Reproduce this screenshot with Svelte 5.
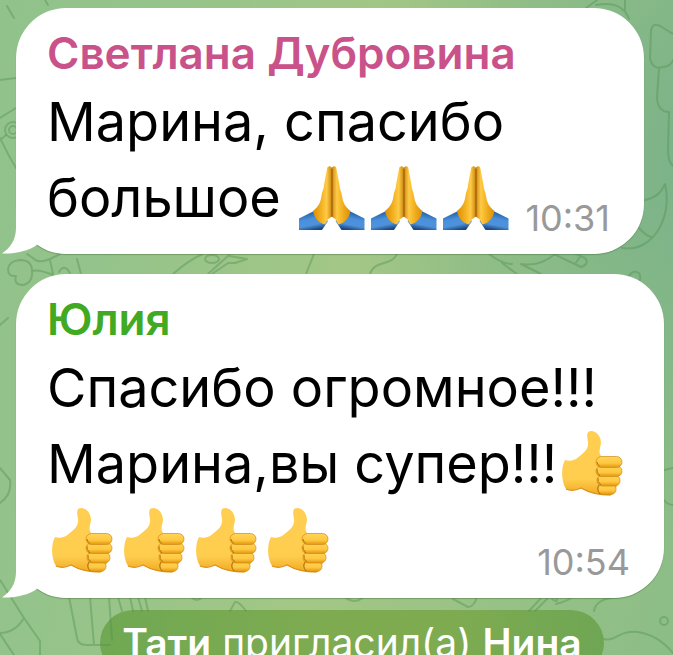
<script lang="ts">
  type Emoji = 'pray' | 'thumb'

  interface Line {
    text: string
    emoji?: Emoji
    count?: number
  }

  interface Message {
    author: string
    tone: string
    time: string
    lines: Line[]
  }

  const messages: Message[] = [
    {
      author: 'Светлана Дубровина',
      tone: 'pink',
      time: '10:31',
      lines: [{ text: 'Марина, спасибо' }, { text: 'большое ', emoji: 'pray', count: 3 }],
    },
    {
      author: 'Юлия',
      tone: 'green',
      time: '10:54',
      lines: [
        { text: 'Спасибо огромное!!!' },
        { text: 'Марина,вы супер!!!', emoji: 'thumb', count: 1 },
        { text: '', emoji: 'thumb', count: 4 },
      ],
    },
  ]
</script>

<svg class="defs" width="0" height="0" aria-hidden="true">
  <defs>
    <linearGradient id="skin" x1="0" y1="0" x2="0" y2="1">
      <stop offset="0" stop-color="#ffcf52" />
      <stop offset="0.75" stop-color="#ffcd4e" />
      <stop offset="1" stop-color="#f0a920" />
    </linearGradient>
    <linearGradient id="finger" x1="0" y1="0" x2="0" y2="1">
      <stop offset="0" stop-color="#ffd45a" />
      <stop offset="0.6" stop-color="#ffc840" />
      <stop offset="1" stop-color="#e2960f" />
    </linearGradient>
    <linearGradient id="palm" x1="0" y1="0" x2="1" y2="0">
      <stop offset="0" stop-color="#d98e08" />
      <stop offset="0.4" stop-color="#f2ae1e" />
      <stop offset="0.72" stop-color="#ffcb45" />
      <stop offset="1" stop-color="#c8820e" />
    </linearGradient>
    <linearGradient id="sleeve" x1="0.2" y1="0" x2="0.5" y2="1">
      <stop offset="0" stop-color="#145499" />
      <stop offset="0.45" stop-color="#4a90da" />
      <stop offset="0.75" stop-color="#4e92da" />
      <stop offset="1" stop-color="#1c4783" />
    </linearGradient>
    <g id="arm">
      <path d="M18 49 L3 56.500 V68 H26 L32 59 Z" fill="url(#sleeve)" />
      <path d="M36 6 C34 3 31 4 31 7 L28 23 C28 27 26 29 25.500 34 C24.500 41 22 45 17 49 C18 56 23 61 29 62.500 C31 60 31 57 34 56 L36 54 Z" fill="url(#palm)" />
    </g>
  </defs>
</svg>

<main class="chat">
  <svg class="doodles" viewBox="0 0 673 655" preserveAspectRatio="xMidYMid slice" aria-hidden="true">
    <path d="M7 6 L14 18 M45 0 L48 5 M0 80 L16 78 M0 118 L16 108 M0 138 Q8 155 16 168 M0 140 L6 135" />
    <circle cx="13" cy="130" r="8" />
    <circle cx="13" cy="130" r="4" />
    <path d="M586 8 L597 0 M596 5 Q622 0 629 19 M625 0 V12" />
    <path d="M673 34 L660 26 Q652 22 651 31 L650 58 Q652 70 663 67 Q671 66 673 60 M659 68 L657 98 Q658 112 669 112 M669 112 L668 150 Q668 162 673 166" />
    <path d="M644 200 Q659 198 665 184 C673 217 653 253 622 248 M639 228 Q645 235 651 237" />
    <path d="M554 254 L581 267 Q590 264 585 258 L572 252 M575 264 L580 257" />
    <path d="M489 254 Q502 264 512 264 M502 263 L517 274 M521 264 Q540 267 555 254 M521 264 L541 274" />
    <path d="M628 278 Q632 269 639 273 Q643 280 636 284" />
    <path d="M370 274 C374 260 392 266 397 254 M173 274 Q190 259 203 254 M208 274 L229 255 M212 274 L228 263 H235 L247 259 L229 256 M306 274 L314 254" />
    <ellipse cx="212" cy="259" rx="7" ry="4" />
    <path d="M32 271 Q32 260 20 260 Q9 261 8 269 Q8 277 16 276 Q13 285 24 285 Q33 282 32 271 Q39 269 53 275 M27 254 L33 258 Q38 264 50 259 L60 254 M50 260 L53 274 M77 259 L81 274 M59 272 Q64 263 70 273" />
    <path d="M0 580 L24 618 L40 641 V655 M0 633 Q15 633 24 618 M0 634 L14 655" />
    <path d="M69 597 L77 638 Q78 645 86 645 H110 M90 597 L94 645 M109 597 L112 640 M118 597 L122 611 M130 597 L133 611 M138 597 L142 611 M145 597 L148 611 M191 597 Q197 603 202 597 M230 611 L235 602 Q239 601 246 611" />
    <path d="M345 597 Q354 605 364 597 M453 599 L468 607 Q474 607 477 597 M529 611 L542 597 M535 611 L549 597 M552 599 Q559 604 556 597 M556 604 Q570 600 572 597" />
    <path d="M594 611 Q596 598 619 597 M604 639 C616 642 618 630 638 632 Q658 635 673 653" />
    <circle cx="664" cy="621" r="4" />
    <path d="M664 470 L673 468 M664 500 Q668 505 673 505 M0 325 L8 318 M0 503 Q12 495 10 480 L0 468" />
  </svg>

  {#each messages as message}
    <article class="bubble {message.tone}">
      <h2 class="author">{message.author}</h2>
      <div class="body">
        {#each message.lines as line}
          <div class="line" class:only-emoji={!line.text}>
            {#if line.text}<span>{line.text}</span>{/if}
            {#each Array(line.count ?? 0) as _}
              {#if line.emoji === 'pray'}
                <svg class="emoji" viewBox="0 0 72 72" role="img" aria-label="Спасибо">
                  <use href="#arm" />
                  <use href="#arm" transform="translate(71.500 0) scale(-1 1)" />
                  <path d="M36 7 V55" stroke="#a96508" stroke-width="1.400" />
                </svg>
              {:else}
                <svg class="emoji" viewBox="0 0 72 72" role="img" aria-label="Класс">
                  <path d="M8 32 Q14 34 19 31 C27 25 32 21 31 14 C30 8 29 3 34 3 C40 3 44 9 44 15 C43 21 41 25 45 29 L58 33 L60 58 L54 67 C44 68 34 66 24 60 Q15 64 9 61 C4 53 4 39 8 32 Z" fill="url(#skin)" />
                  <path d="M9 61 Q16 64 24 60 C34 66 43 67 54 67" fill="none" stroke="#dc901c" stroke-width="1.200" />
                  <g fill="url(#finger)" stroke="#d08b16" stroke-width="0.700">
                    <rect x="41" y="56" width="18" height="10.500" rx="5" />
                    <rect x="40" y="47" width="23" height="11" rx="5.300" />
                    <rect x="39" y="38" width="26" height="10.500" rx="5.200" />
                    <rect x="39" y="28.500" width="26" height="11" rx="5.500" />
                  </g>
                  <path d="M43 38.500 Q40 36 40 34 M43 48 Q39 44 40 41 M44 57 Q40 54 41 50 M43 66 Q39 61 42 57" fill="none" stroke="#b8730c" stroke-width="1" />
                </svg>
              {/if}
            {/each}
          </div>
        {/each}
        <time class="time">{message.time}</time>
      </div>
      <svg class="tail" viewBox="0 0 40 60" aria-hidden="true">
        <path d="M14 0 V34 C14 46 8 54 0 59.500 C14 60 26 57 35 51 Z" />
      </svg>
    </article>
  {/each}

  <p class="notice"><b>Тати</b> пригласил(а) <b>Нина</b></p>
</main>

<style>
  :global(body) {
    margin: 0;
  }
  .defs {
    position: absolute;
  }
  .chat {
    position: relative;
    height: 100vh;
    box-sizing: border-box;
    padding: 8px 9px 0 16px;
    overflow: hidden;
    display: flex;
    flex-direction: column;
    align-items: stretch;
    font-family: Inter, sans-serif;
    background:
      radial-gradient(circle at 110% 25%, #79b189 0%, rgba(121, 177, 137, 0) 45%),
      linear-gradient(100deg, #92c28b 0%, #94c38b 18%, #a3c785 52%, #8cbd87 100%);
  }
  .doodles {
    position: absolute;
    inset: 0;
    width: 100%;
    height: 100%;
    fill: none;
    stroke: rgba(82, 145, 82, 0.42);
    stroke-width: 2;
    stroke-linecap: round;
    stroke-linejoin: round;
  }
  .bubble {
    position: relative;
    flex: none;
    background: #fff;
    border-radius: 50px;
    padding: 14px 34px 18px 31px;
    margin-bottom: 20px;
    box-shadow: 0 1px 1px rgba(60, 100, 50, 0.4);
  }
  .bubble.pink {
    margin-right: 20px;
  }
  .bubble.green {
    margin-bottom: 12px;
  }
  .author {
    margin: 0;
    font-size: 44px;
    line-height: 62px;
    font-weight: 600;
  }
  .pink .author { color: #c9528a; }
  .green .author { color: #42aa22; }
  .body {
    position: relative;
    color: #000;
    font-size: 54px;
    line-height: 76px;
  }
  .line {
    display: flex;
    align-items: center;
    height: 76px;
    white-space: pre;
  }
  .line.only-emoji {
    height: 78px;
  }
  .emoji {
    flex: none;
    width: 72px;
    height: 72px;
  }
  .time {
    position: absolute;
    right: 0;
    bottom: -4px;
    color: #999;
    font-size: 36px;
    line-height: 44px;
  }
  .tail {
    position: absolute;
    left: -14px;
    bottom: 0;
    width: 40px;
    height: 60px;
    fill: #fff;
  }
  .notice {
    flex: none;
    align-self: center;
    margin: 0 0 0 24px;
    padding: 0 22px;
    border-radius: 33px;
    font-size: 39px;
    line-height: 66px;
    white-space: nowrap;
    color: #fff;
    background: linear-gradient(90deg, #70a853 0%, #7eab50 45%, #7eab50 70%, #6fa654 100%);
  }
  .notice b {
    font-weight: 600;
  }
</style>
